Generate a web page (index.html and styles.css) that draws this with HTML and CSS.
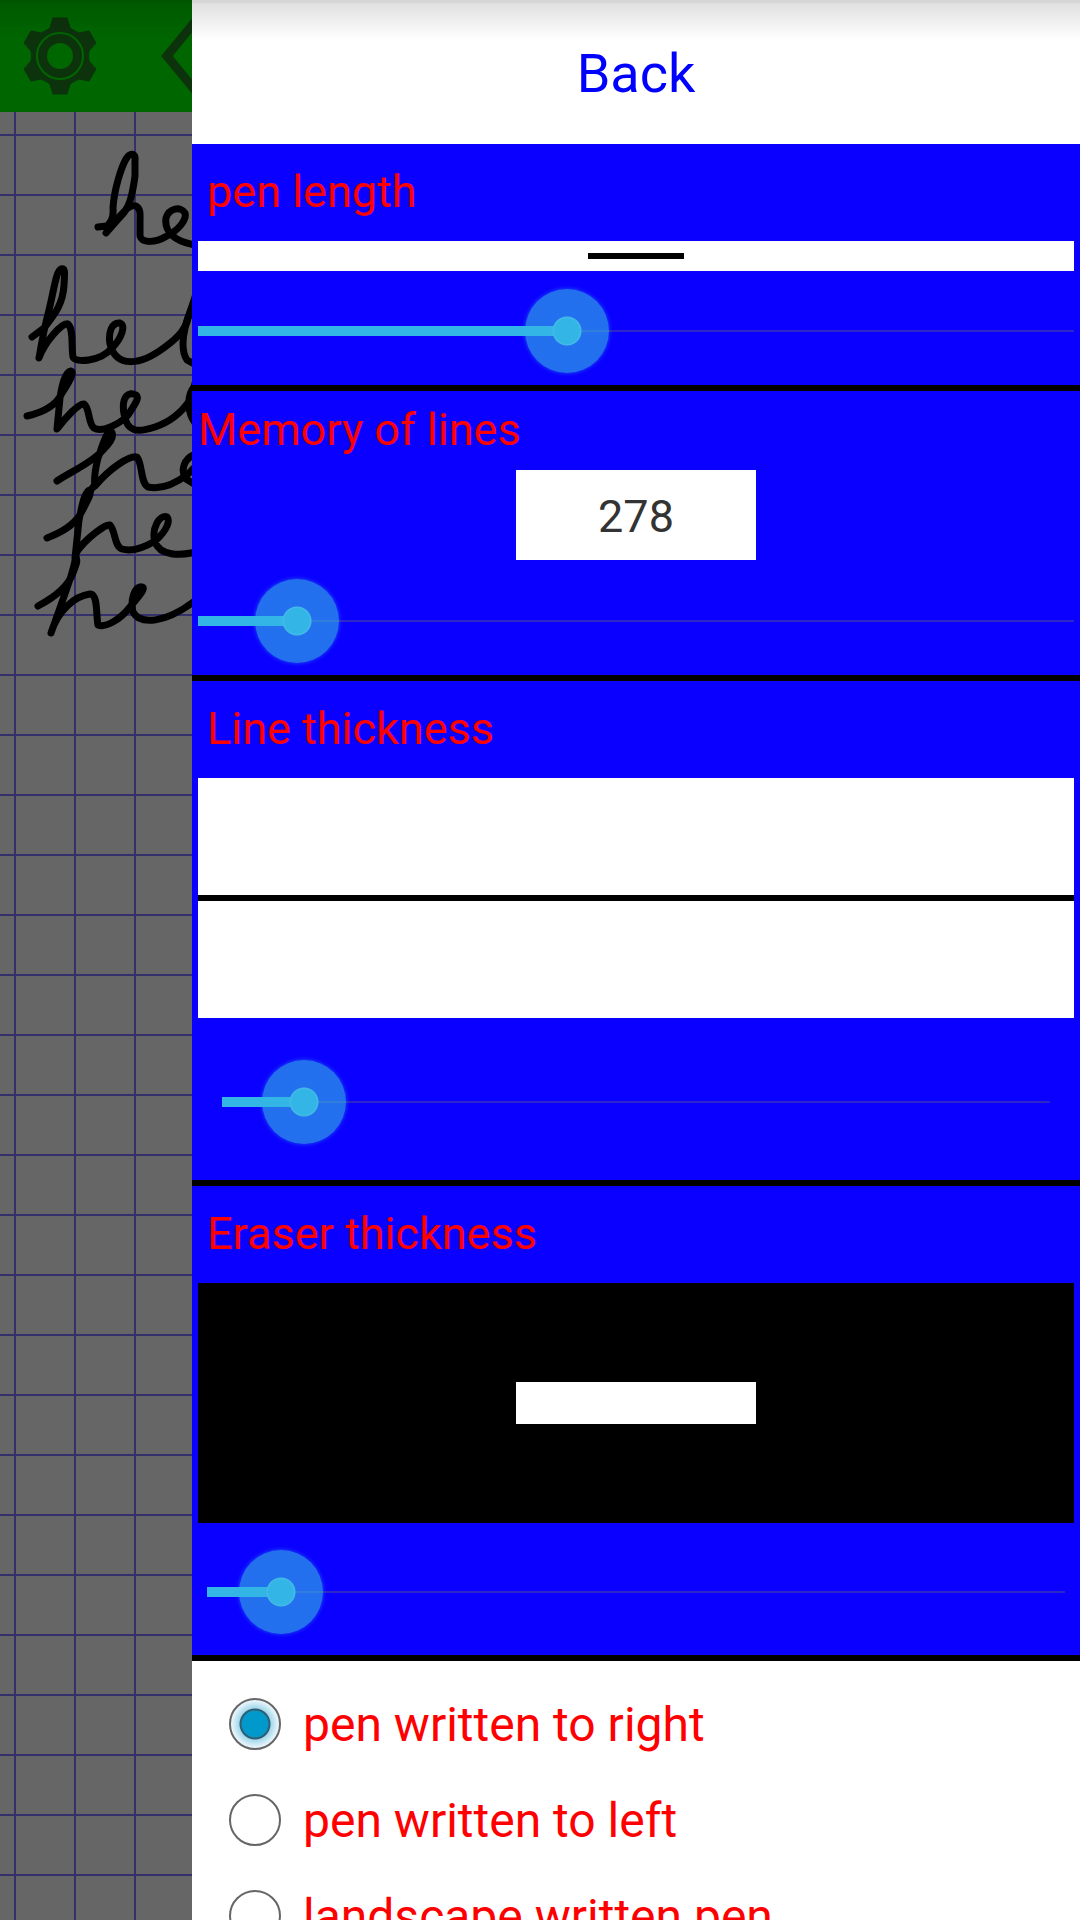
FILE: index.html
```
<!DOCTYPE html>
<html lang="en">
<head>
    <meta charset="UTF-8">
    <meta name="viewport" content="width=device-width, initial-scale=1.0">
    <title>Pen Settings</title>
    <link rel="stylesheet" href="styles.css">
</head>
<body>
    <div class="app">
        <!-- Notebook behind the drawer -->
        <div class="notebook">
            <div class="toolbar">
                <button type="button" class="tool" aria-label="Settings">
                    <svg viewBox="-60 -56 120 112">
                        <path class="gear" d="M-10,-28 L-7,-38 L7,-38 L10,-28 Q14,-25 19,-23 L29,-25 L36,-13 L29,-5 Q28,0 29,5 L36,13 L29,25 L19,23 Q14,25 10,28 L7,38 L-7,38 L-10,28 Q-14,25 -19,23 L-29,25 L-36,13 L-29,5 Q-28,0 -29,-5 L-36,-13 L-29,-25 L-19,-23 Q-14,-25 -10,-28 Z"/>
                        <circle class="gear-ring" r="23"/>
                        <circle class="gear-hole" r="13"/>
                    </svg>
                </button>
                <button type="button" class="tool" aria-label="Previous page">
                    <svg viewBox="0 0 120 112">
                        <path class="chevron" d="M88,6 L47,56 L88,106"/>
                    </svg>
                </button>
            </div>
            <div class="paper">
                <svg class="ink" viewBox="0 112 192 560">
                    <path d="M98,227 L107,226 C110,223 114,219 113,208 C114,190 121,168 126,159 C130,152 136,153 135,160 L135,176 C132,198 129,208 121,216 L106,233 L119,217 C124,211 131,204 136,206 C141,209 140,214 140,222 L140,236 C142,244 157,242 165,237 C178,231 187,220 185,213 C181,206 169,208 166,218 C164,232 175,242 196,245"/>
                    <path d="M32,337 L44,328 C56,313 63,303 64,285 C65,270 65,268 61,269 C56,271 54,290 49,310 C45,325 42,340 39,358 C44,343 62,322 68,324 C74,330 71,345 73,357 C75,363 100,362 112,348 C122,338 126,325 120,323 C112,322 108,332 110,344 C116,368 140,366 165,347 C180,336 186,328 188,318 L196,294"/>
                    <path d="M196,300 C182,325 180,350 187,360 L196,365"/>
                    <path d="M27,416 C45,412 57,404 62,393 C72,378 74,372 71,371 C65,372 62,385 60,398 L57,429 C65,418 80,402 84,404 C90,408 88,424 94,428 C102,433 120,424 128,415 C138,400 139,397 136,395 C129,391 121,396 124,414 C127,432 137,433 155,427 C170,422 182,412 190,400 L196,380"/>
                    <path d="M196,385 C185,395 188,415 196,424"/>
                    <path d="M57,481 C70,472 92,463 103,450 C114,439 114,434 111,431 C107,430 103,444 98,458 C95,470 94,480 95,486 C110,468 130,455 137,457 C143,465 140,482 148,487 C162,490 175,484 188,474 L196,466"/>
                    <path d="M196,454 C184,458 180,470 186,479 L196,485"/>
                    <path d="M94,486 L89,492 M47,538 C60,533 72,527 80,515 C86,503 92,494 90,490 C85,490 82,505 79,520 L75,558 C74,548 105,523 110,525 C116,532 114,546 122,549 C132,552 145,547 155,541 C168,530 170,520 167,517 C160,514 151,528 155,542 C160,556 180,556 196,552"/>
                    <path d="M38,606 C55,597 68,587 73,573 C78,560 77,562 76,556 C73,573 68,585 51,633 C58,610 75,596 90,594 C98,594 96,615 98,625 C105,628 120,620 130,607 C140,595 146,588 142,587 C135,585 130,600 133,612 C140,625 165,624 196,600"/>
                </svg>
            </div>
        </div>

        <!-- Settings Drawer -->
        <div class="drawer">
            <button type="button" class="back">Back</button>

            <section class="setting">
                <label class="title" for="penLength">pen length</label>
                <div class="preview preview-length">
                    <span class="stroke"></span>
                </div>
                <input type="range" class="slider" id="penLength" min="0" max="100" step="any" value="41.3">
            </section>

            <section class="setting memory">
                <label class="title" for="memory">Memory of lines</label>
                <output class="count" for="memory">278</output>
                <input type="range" class="slider" id="memory" min="0" max="100" step="any" value="7.2">
            </section>

            <section class="setting line">
                <label class="title" for="lineThickness">Line thickness</label>
                <div class="preview preview-line">
                    <span class="stroke"></span>
                </div>
                <input type="range" class="slider" id="lineThickness" min="0" max="100" step="any" value="5.4">
            </section>

            <section class="setting eraser">
                <label class="title" for="eraserThickness">Eraser thickness</label>
                <div class="preview preview-eraser">
                    <span class="stroke"></span>
                </div>
                <input type="range" class="slider" id="eraserThickness" min="0" max="100" step="any" value="4.1">
            </section>

            <form class="directions">
                <label class="option">
                    <input type="radio" name="direction" value="right" checked>
                    <span>pen written to right</span>
                </label>
                <label class="option">
                    <input type="radio" name="direction" value="left">
                    <span>pen written to left</span>
                </label>
                <label class="option">
                    <input type="radio" name="direction" value="landscape">
                    <span>landscape written pen</span>
                </label>
            </form>
        </div>
    </div>
    <div class="top-shadow"></div>

    <script>
        // Keep the filled part of each slider in step with its value
        document.querySelectorAll(".slider").forEach((slider) => {
            const update = () => slider.style.setProperty("--value", slider.value / 100);
            slider.addEventListener("input", update);
            update();
        });
    </script>
</body>
</html>
```
FILE: styles.css
```
/* Global Styles */
* {
    margin: 0;
    padding: 0;
    box-sizing: border-box;
    font-family: Roboto, sans-serif;
}

button {
    border: none;
    background: none;
    cursor: pointer;
}

.app {
    display: grid;
    grid-template-columns: minmax(0, 8fr) minmax(0, 37fr);
    height: 100vh;
    overflow: hidden;
}

/* Shadow under the status bar */
.top-shadow {
    position: absolute;
    top: 0;
    left: 0;
    right: 0;
    height: 40px;
    border-top: 3px solid rgba(0, 0, 0, 0.16);
    background: linear-gradient(rgba(0, 0, 0, 0.12), rgba(0, 0, 0, 0));
    background-clip: padding-box;
    pointer-events: none;
}

/* Notebook */
.notebook {
    display: flex;
    flex-direction: column;
    overflow: hidden;
}

.toolbar {
    display: flex;
    height: 112px;
    background: #006600;
    overflow: hidden;
}

.tool {
    flex: none;
    width: 120px;
    height: 112px;
}

.tool svg {
    display: block;
    width: 120px;
    height: 112px;
}

.gear {
    fill: #0d330d;
    stroke: #0d330d;
    stroke-width: 1;
    stroke-linejoin: round;
}

.gear-ring {
    fill: none;
    stroke: #006600;
    stroke-width: 2;
}

.gear-hole {
    fill: #006600;
}

.chevron {
    fill: none;
    stroke: #0d330d;
    stroke-width: 9;
}

.paper {
    flex: 1;
    background-color: #666666;
    background-image:
        linear-gradient(#33306b 2px, transparent 2px),
        linear-gradient(90deg, #33306b 2px, transparent 2px);
    background-size: 60px 60px;
    background-position: 14px 22px;
}

.ink {
    display: block;
    width: 192px;
    height: 560px;
    fill: none;
    stroke: #000000;
    stroke-width: 7;
    stroke-linecap: round;
    stroke-linejoin: round;
}

/* Drawer */
.drawer {
    background: #ffffff;
    overflow-y: auto;
    scrollbar-width: none;
}

.back {
    display: block;
    width: 100%;
    height: 144px;
    padding-top: 2px;
    color: #0000ff;
    font-size: 54px;
}

.setting {
    display: flex;
    flex-direction: column;
    padding: 0 6px 6px;
    background: #0a00ff;
    border-bottom: 6px solid #000000;
}

.title {
    padding: 0 0 2px 9px;
    color: #ff0000;
    font-size: 45px;
    line-height: 95px;
}

.memory .title {
    padding-left: 0;
    line-height: 77px;
}

.count {
    align-self: center;
    width: 240px;
    height: 90px;
    padding-top: 2px;
    background: #ffffff;
    color: #333333;
    font-size: 45px;
    line-height: 90px;
    text-align: center;
}

/* Previews */
.preview {
    display: flex;
    align-items: center;
    justify-content: center;
    height: 240px;
    background: #ffffff;
}

.preview-length {
    height: 30px;
}

.preview-eraser {
    background: #000000;
}

.stroke {
    width: 100%;
    height: 6px;
    background: #000000;
}

.preview-length .stroke {
    width: 96px;
}

.preview-eraser .stroke {
    width: 240px;
    height: 42px;
    background: #ffffff;
}

/* Sliders */
.slider {
    appearance: none;
    height: 96px;
    margin: 12px 0 0;
    background-color: transparent;
    background-image:
        linear-gradient(#33b5e5, #33b5e5),
        linear-gradient(#2d26c8, #2d26c8);
    background-size: calc(42px + var(--value) * (100% - 84px)) 10px, 100% 2px;
    background-position: left center;
    background-repeat: no-repeat;
    cursor: pointer;
}

.slider::-webkit-slider-thumb {
    appearance: none;
    width: 84px;
    height: 84px;
    border-radius: 50%;
    background: radial-gradient(circle, #33b5e5 12px, #43bbe7 14px, rgba(51, 181, 229, 0.62) 15px);
    box-shadow: 0 0 4px rgba(51, 181, 229, 0.5);
}

.memory .slider {
    margin-top: 13px;
}

.line .slider {
    margin: 36px 24px 24px;
}

.eraser .slider {
    margin: 21px 9px 9px;
}

/* Writing direction */
.directions {
    padding: 15px 37px;
}

.option {
    display: flex;
    align-items: center;
    gap: 22px;
    height: 96px;
    color: #ff0000;
    font-size: 48px;
    white-space: nowrap;
    cursor: pointer;
}

.option input {
    appearance: none;
    flex: none;
    width: 52px;
    height: 52px;
    border: 2px solid #666666;
    border-radius: 50%;
    background: #ffffff;
}

.option input:checked {
    background: radial-gradient(circle, #0099cc 12px, #1192c0 13px, #2b5f73 14px, #2b5f73 15px, #a5d8ec 16px, #eef8fc 24px);
}
```
